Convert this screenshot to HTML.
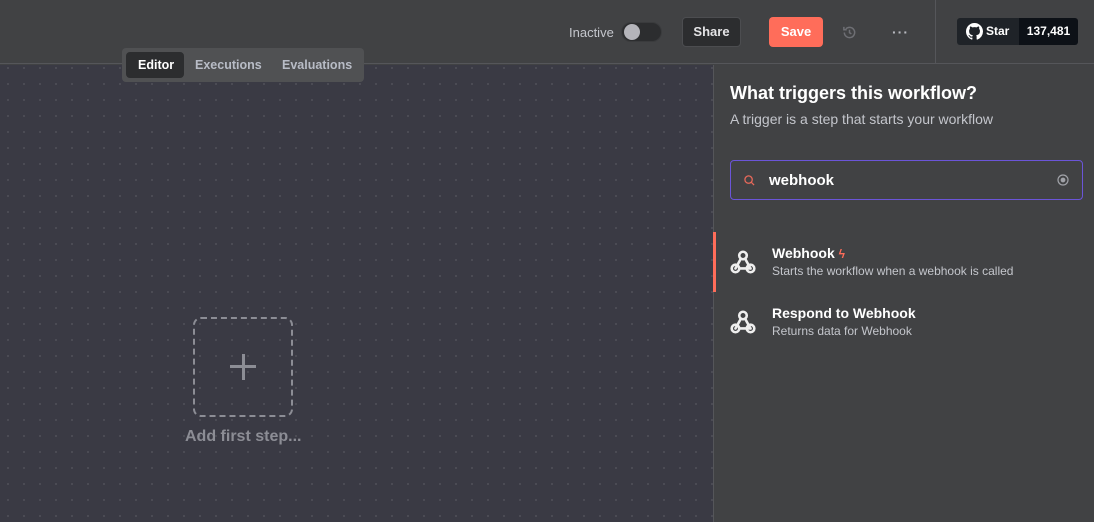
<!DOCTYPE html>
<html><head><meta charset="utf-8"><style>
*{box-sizing:border-box;margin:0;padding:0}
body{width:1094px;height:522px;overflow:hidden;background:#414244;font-family:"Liberation Sans",sans-serif;position:relative;color:#f0f0f0}
.hdr{position:absolute;left:0;top:0;width:1094px;height:64px;background:#414244;border-bottom:1px solid #55565a}
.canvas{position:absolute;left:0;top:65px;width:714px;height:457px;background-color:#3a3a44;background-image:radial-gradient(circle,#66666f 0.5px,transparent 0.9px);background-size:16px 16px;background-position:0px -5px}
.panel{position:absolute;left:713px;top:65px;width:381px;height:457px;background:#414244;border-left:1px solid #55565a}
.tabs{position:absolute;left:122px;top:48px;width:242px;height:34px;background:#505153;border-radius:4px}
.tab{position:absolute;top:4px;height:26px;line-height:26px;font-size:12.5px;font-weight:bold;color:#b8bcc6}
</style></head><body>
<div class="hdr">
 <div style="position:absolute;left:569px;top:25px;font-size:13px;color:#c4c6cc">Inactive</div>
 <div style="position:absolute;left:621px;top:22px;width:41px;height:20px;border-radius:10px;background:#2c2d2f;border:1px solid #3a3b3d"></div>
 <div style="position:absolute;left:624px;top:24px;width:16px;height:16px;border-radius:50%;background:#b4b4ba"></div>
 <div style="position:absolute;left:682px;top:17px;width:59px;height:30px;border-radius:4px;background:#2c2d2f;border:1px solid #4c4d50;font-size:13px;font-weight:bold;text-align:center;line-height:28px;color:#e4e4e6">Share</div>
 <div style="position:absolute;left:769px;top:17px;width:54px;height:30px;border-radius:4px;background:#ff6d5a;font-size:13px;font-weight:bold;text-align:center;line-height:30px;color:#fff">Save</div>
 <svg style="position:absolute;left:842px;top:25px" width="15" height="15" viewBox="0 0 16 16" fill="none" stroke="#6e6f74" stroke-width="1.6"><path d="M2.5 8a5.5 5.5 0 1 0 1.6-3.9M2 2v3h3M8 5v3.2l2 1.3"/></svg>
 <div style="position:absolute;left:892px;top:24px;font-size:14px;color:#b8bac0;font-weight:bold;letter-spacing:1px">···</div>
 <div style="position:absolute;left:935px;top:0;width:1px;height:64px;background:#55565a"></div>
 <div style="position:absolute;left:957px;top:18px;width:62px;height:27px;border-radius:3px 0 0 3px;background:#1f2328"></div>
 <svg style="position:absolute;left:966px;top:23px" width="17" height="17" viewBox="0 0 16 16"><path fill="#fff" d="M8 0C3.58 0 0 3.58 0 8c0 3.540 2.29 6.53 5.47 7.59.4.07.55-.17.55-.38 0-.19-.01-.82-.01-1.490-2.01.37-2.53-.49-2.69-.94-.09-.23-.48-.94-.82-1.13-.28-.15-.68-.52-.01-.53.63-.01 1.08.58 1.230.82.72 1.21 1.870.87 2.330.66.07-.52.28-.87.51-1.070-1.78-.2-3.64-.89-3.64-3.95 0-.87.31-1.59.82-2.150-.08-.2-.36-1.02.08-2.12 0 0 .67-.21 2.2.82.64-.18 1.32-.27 2-.27.68 0 1.36.09 2 .27 1.53-1.04 2.2-.82 2.2-.82.44 1.1.16 1.92.08 2.12.51.56.82 1.27.82 2.15 0 3.07-1.870 3.75-3.650 3.95.29.25.54.73.54 1.48 0 1.07-.01 1.93-.01 2.2 0 .21.15.46.55.38A8.013 8.013 0 0016 8c0-4.42-3.58-8-8-8z"/></svg>
 <div style="position:absolute;left:986px;top:24px;font-size:12px;font-weight:bold;color:#fff">Star</div>
 <div style="position:absolute;left:1019px;top:18px;width:59px;height:27px;border-radius:0 3px 3px 0;background:#0d1117;font-size:12px;font-weight:bold;color:#fff;text-align:center;line-height:27px">137,481</div>
</div>
<div class="canvas">
 <div style="position:absolute;left:193px;top:252px;width:100px;height:100px;border:2px dashed #8c8d95;border-radius:8px"></div>
 <div style="position:absolute;left:230px;top:300px;width:26px;height:3px;background:#8c8d95"></div>
 <div style="position:absolute;left:241.5px;top:289px;width:3px;height:26px;background:#8c8d95"></div>
 <div style="position:absolute;left:185px;top:363px;font-size:16px;color:#8c8d95;font-weight:bold">Add first step...</div>
</div>
<div class="tabs">
 <div style="position:absolute;left:4px;top:4px;width:58px;height:26px;background:#2c2d2f;border-radius:4px"></div>
 <div class="tab" style="left:16px;color:#fff">Editor</div>
 <div class="tab" style="left:73px">Executions</div>
 <div class="tab" style="left:160px">Evaluations</div>
</div>
<div class="panel">
 <div style="position:absolute;left:16px;top:18px;font-size:18px;font-weight:bold;color:#fff">What triggers this workflow?</div>
 <div style="position:absolute;left:16px;top:46px;font-size:14px;color:#c4c6cc">A trigger is a step that starts your workflow</div>
 <div style="position:absolute;left:16px;top:95px;width:353px;height:40px;border:1px solid #6b55d8;border-radius:4px"></div>
 <svg style="position:absolute;left:30px;top:110px" width="11" height="11" viewBox="0 0 12 12" fill="none" stroke="#e8695a" stroke-width="1.4"><circle cx="5" cy="5" r="4"/><path d="M8 8l3 3"/></svg>
 <div style="position:absolute;left:55px;top:107px;font-size:15px;color:#fff;font-weight:bold">webhook</div>
 <svg style="position:absolute;left:343px;top:109px" width="12" height="12" viewBox="0 0 12 12" fill="none" stroke="#a0a2a8" stroke-width="1.2"><circle cx="6" cy="6" r="5"/><circle cx="6" cy="6" r="1.8" fill="#a0a2a8"/></svg>
 <div style="position:absolute;left:-1px;top:167px;width:3px;height:60px;background:#ff6d5a"></div>
 <svg style="position:absolute;left:15px;top:183px" width="28" height="28" viewBox="0 0 26 26" fill="none" stroke="#eee" stroke-width="2.4" stroke-linecap="round"><circle cx="13" cy="7" r="3.5"/><circle cx="6" cy="19" r="3.5"/><circle cx="20" cy="19" r="3.5"/><path d="M11 10l-5 9M9.5 19h10.5M15 10l5 9"/></svg>
 <div style="position:absolute;left:58px;top:180px;font-size:14px;font-weight:bold;color:#fff">Webhook <span style="color:#ff6d5a;font-size:12px">ϟ</span></div>
 <div style="position:absolute;left:58px;top:199px;font-size:12px;color:#c4c6cc">Starts the workflow when a webhook is called</div>
 <svg style="position:absolute;left:15px;top:243px" width="28" height="28" viewBox="0 0 26 26" fill="none" stroke="#eee" stroke-width="2.4" stroke-linecap="round"><circle cx="13" cy="7" r="3.5"/><circle cx="6" cy="19" r="3.5"/><circle cx="20" cy="19" r="3.5"/><path d="M11 10l-5 9M9.5 19h10.5M15 10l5 9"/></svg>
 <div style="position:absolute;left:58px;top:240px;font-size:14px;font-weight:bold;color:#fff">Respond to Webhook</div>
 <div style="position:absolute;left:58px;top:259px;font-size:12px;color:#c4c6cc">Returns data for Webhook</div>
</div>
</body></html>
